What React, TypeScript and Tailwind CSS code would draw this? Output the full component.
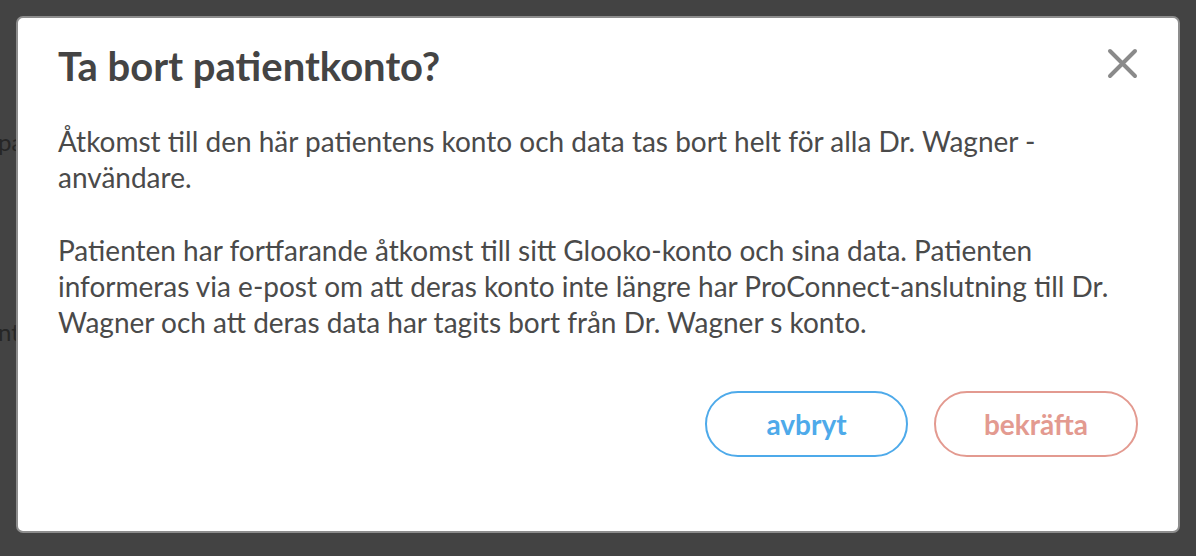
import React from "react";

const CloseIcon: React.FC = () => (
  <svg width="31" height="31" viewBox="0 0 31 31" fill="none" stroke="#8a8a8a" strokeWidth="4" strokeLinecap="round">
    <path d="M3 3 L28 28 M28 3 L3 28" />
  </svg>
);

const App: React.FC = () => {
  return (
    <div
      className="relative w-[1196px] h-[556px] overflow-hidden bg-[#434343]"
      style={{ fontFamily: "Lato, 'Open Sans', sans-serif" }}
    >
      {/* dimmed page behind the dialog */}
      <div className="pt-[124px] text-[24px] text-[#262626] -ml-[2px]">
        <div className="h-[190px]">pa</div>
        <div>nt</div>
      </div>

      <div className="absolute left-[16px] top-[16px] w-[1164px] h-[517px] rounded-[7px] border-2 border-[#8d8d8d] bg-white">
        <div className="px-[40px] pt-[24px]">
          <div className="flex items-start justify-between">
            <h2 className="text-[40px] leading-[48px] font-bold text-[#444444]">Ta bort patientkonto?</h2>
            <button className="mt-[6px]">
              <CloseIcon />
            </button>
          </div>

          <div className="mt-[33px] text-[28px] leading-[36px] text-[#4a4a4a] w-[1084px]">
            <p>Åtkomst till den här patientens konto och data tas bort helt för alla Dr. Wagner - användare.</p>
            <p className="mt-[37px]">
              Patienten har fortfarande åtkomst till sitt Glooko-konto och sina data. Patienten informeras via e-post om att
              deras konto inte längre har ProConnect-anslutning till Dr. Wagner och att deras data har tagits bort från Dr.
              Wagner s konto.
            </p>
          </div>

          <div className="mt-[51px] flex justify-end gap-[26px]">
            <button className="w-[203px] h-[66px] rounded-full border-2 border-[#4eaaea] text-[28px] font-bold text-[#4eaaea]">
              avbryt
            </button>
            <button className="w-[204px] h-[66px] rounded-full border-2 border-[#e39a90] text-[28px] font-bold text-[#e39a90]">
              bekräfta
            </button>
          </div>
        </div>
      </div>
    </div>
  );
};

export default App;
